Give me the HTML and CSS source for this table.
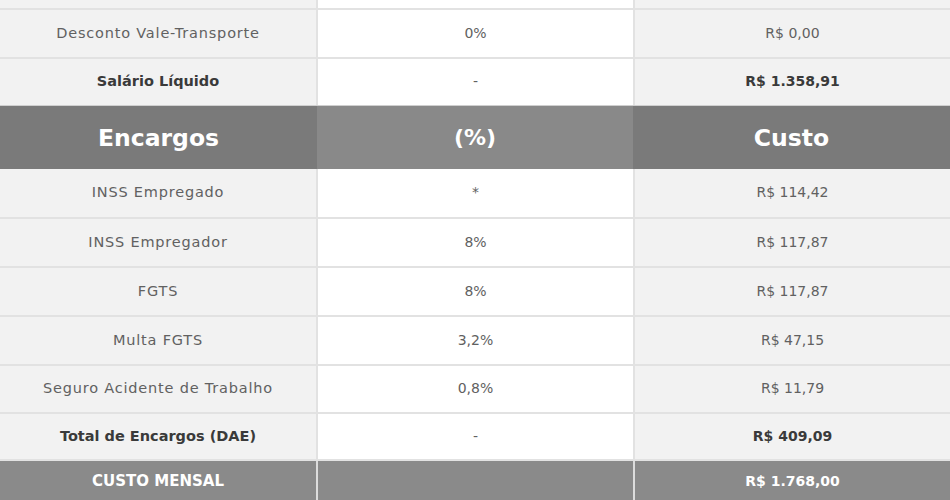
FILE: index.html
```html
<!DOCTYPE html>
<html lang="pt-BR">
<head>
<meta charset="utf-8">
<title>Custo Mensal</title>
<link rel="stylesheet" href="styles.css">
</head>
<body>
<div class="sheet">
  <div class="row">
    <div class="cell c1"></div>
    <div class="cell c2"></div>
    <div class="cell c3"></div>
  </div>
  <div class="row">
    <div class="cell c1">Desconto Vale-Transporte</div>
    <div class="cell c2">0%</div>
    <div class="cell c3">R$ 0,00</div>
  </div>
  <div class="row row-last">
    <div class="cell c1 strong">Salário Líquido</div>
    <div class="cell c2">-</div>
    <div class="cell c3 strong">R$ 1.358,91</div>
  </div>
  <div class="head">
    <div class="hcell h1">Encargos</div>
    <div class="hcell h2">(%)</div>
    <div class="hcell h3">Custo</div>
  </div>
  <div class="row row-first">
    <div class="cell c1">INSS Empregado</div>
    <div class="cell c2">*</div>
    <div class="cell c3">R$ 114,42</div>
  </div>
  <div class="row">
    <div class="cell c1">INSS Empregador</div>
    <div class="cell c2">8%</div>
    <div class="cell c3">R$ 117,87</div>
  </div>
  <div class="row">
    <div class="cell c1">FGTS</div>
    <div class="cell c2">8%</div>
    <div class="cell c3">R$ 117,87</div>
  </div>
  <div class="row">
    <div class="cell c1">Multa FGTS</div>
    <div class="cell c2">3,2%</div>
    <div class="cell c3">R$ 47,15</div>
  </div>
  <div class="row row-short">
    <div class="cell c1">Seguro Acidente de Trabalho</div>
    <div class="cell c2">0,8%</div>
    <div class="cell c3">R$ 11,79</div>
  </div>
  <div class="row row-dae">
    <div class="cell c1 strong">Total de Encargos (DAE)</div>
    <div class="cell c2">-</div>
    <div class="cell c3 strong">R$ 409,09</div>
  </div>
  <div class="row total">
    <div class="cell tlabel">CUSTO MENSAL</div>
    <div class="cell"></div>
    <div class="cell">R$ 1.768,00</div>
  </div>
</div>
</body>
</html>
```

FILE: styles.css
```css
html, body {
  margin: 0;
  padding: 0;
  background: #ffffff;
}

body {
  font-family: "DejaVu Sans", Verdana, sans-serif;
  overflow: hidden;
}

.sheet {
  width: 950px;
  display: flex;
  flex-direction: column;
  margin-top: -39px;
}

.row {
  display: grid;
  grid-template-columns: 316px 315px 315px;
  column-gap: 2px;
  height: 47px;
  border-bottom: 2px solid #e2e2e2;
  background: #e2e2e2;
}

.row-last {
  height: 46px;
  border-bottom: 1px solid #cfcfcf;
}

.row-first {
  height: 48px;
}

.row-short {
  height: 46px;
}

.row-dae {
  height: 45px;
}

.cell {
  display: flex;
  align-items: center;
  justify-content: center;
  font-size: 14px;
  color: #616161;
  font-weight: 400;
  padding-bottom: 2px;
  box-sizing: border-box;
}

.c1 {
  font-size: 14.5px;
  letter-spacing: 0.8px;
}

.c1, .c3 {
  background: #f2f2f2;
}

.c2 {
  background: #ffffff;
}

.strong,
.c1.strong {
  font-weight: 700;
  font-size: 14.5px;
  letter-spacing: 0;
  color: #3a3a3a;
}

.c3.strong {
  font-size: 14px;
}

.head {
  display: grid;
  grid-template-columns: 317px 316px 317px;
  height: 63px;
}

.hcell {
  display: flex;
  align-items: center;
  justify-content: center;
  color: #ffffff;
  font-weight: 700;
  font-size: 23.5px;
}

.h1, .h3 {
  background: #7a7a7a;
}

.h2 {
  background: #898989;
  font-size: 22px;
}

.total {
  height: 41px;
  border-bottom: none;
  background: #dcdcdc;
}

.total .cell {
  background: #8a8a8a;
  color: #ffffff;
  font-weight: 700;
  font-size: 14px;
}

.total .tlabel {
  font-size: 15px;
}
```
